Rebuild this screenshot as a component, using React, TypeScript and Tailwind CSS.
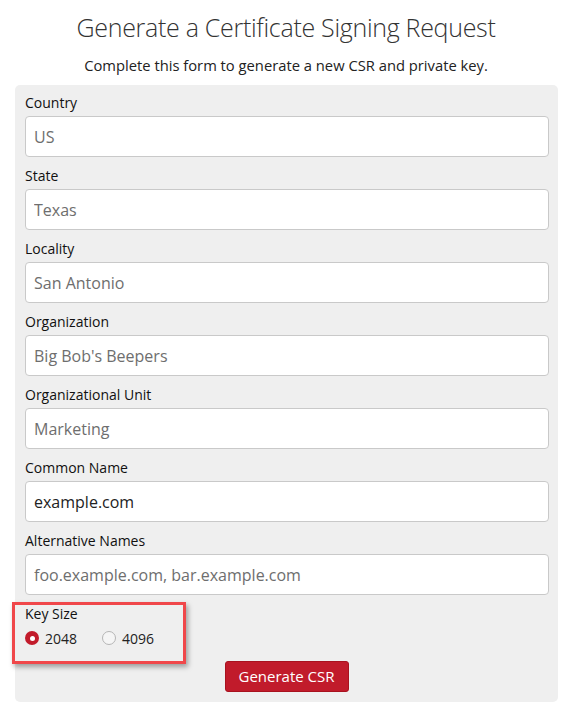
import React from "react";

const fields: { label: string; value?: string; placeholder?: string }[] = [
  { label: "Country", placeholder: "US" },
  { label: "State", placeholder: "Texas" },
  { label: "Locality", placeholder: "San Antonio" },
  { label: "Organization", placeholder: "Big Bob's Beepers" },
  { label: "Organizational Unit", placeholder: "Marketing" },
  { label: "Common Name", value: "example.com" },
  { label: "Alternative Names", placeholder: "foo.example.com, bar.example.com" },
];

export default function App() {
  return (
    <div
      className="relative w-[572px] h-[719px] bg-white text-[#222]"
      style={{ fontFamily: '"Open Sans", "Noto Sans", sans-serif' }}
    >
      <h1 className="pt-[10px] text-center text-[25px] leading-[34px] font-light text-[#333] tracking-[-0.3px]">
        Generate a Certificate Signing Request
      </h1>
      <p className="mt-[11px] text-center text-[14.75px] leading-[20px] text-[#222]">
        Complete this form to generate a new CSR and private key.
      </p>
      <form className="mx-[15px] mt-[10px] w-[543px] rounded-[5px] bg-[#efefef] px-[10px] pt-[8px] pb-[10px]">
        {fields.map((f) => (
          <div key={f.label} className="mb-[9px]">
            <label className="block text-[14px] leading-[20px] mb-[3px] text-[#111]">{f.label}</label>
            <input
              readOnly
              defaultValue={f.value}
              placeholder={f.placeholder}
              className="block w-[524px] h-[41px] rounded-[4px] border border-[#c9c9c9] bg-white px-[8px] text-[16px] text-[#222] placeholder:text-[#6e6e6e] outline-none"
              style={{ fontFamily: '"Open Sans", "Noto Sans", sans-serif' }}
            />
          </div>
        ))}
        <div>
          <div className="text-[14px] leading-[20px] text-[#111]">Key Size</div>
          <div className="mt-[4px] flex h-[20px] items-center text-[14px]">
            <span className="flex items-center">
              <span className="flex h-[14px] w-[14px] items-center justify-center rounded-full bg-[#c21b2b]">
                <span className="h-[5px] w-[5px] rounded-full bg-white" />
              </span>
              <span className="ml-[6px]">2048</span>
            </span>
            <span className="ml-[25px] flex items-center">
              <span className="h-[14px] w-[14px] rounded-full border border-[#b5b5b5] bg-[#f5f5f5]" />
              <span className="ml-[6px]">4096</span>
            </span>
          </div>
        </div>
        <div className="mt-[13px] flex justify-center">
          <button
            type="button"
            className="h-[31px] w-[124px] rounded-[3px] border border-[#a8121f] bg-[#c11b2b] text-[15px] text-white"
            style={{ fontFamily: '"Open Sans", "Noto Sans", sans-serif' }}
          >
            Generate CSR
          </button>
        </div>
      </form>
      <div className="pointer-events-none absolute left-[12px] top-[602px] h-[62px] w-[174px] border-[3px] border-[#f0474a] shadow-[2px_3px_5px_rgba(0,0,0,0.35)]" />
    </div>
  );
}
